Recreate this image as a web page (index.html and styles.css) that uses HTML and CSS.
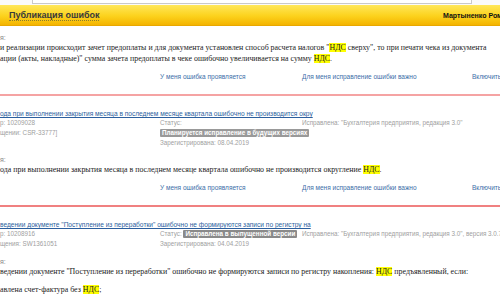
FILE: index.html
```html
<!DOCTYPE html>
<html lang="ru">
<head>
<meta charset="utf-8">
<title>Публикация ошибок</title>
<link rel="stylesheet" href="styles.css">
</head>
<body>
<div class="page">
  <div class="toolbar"><div class="search"></div></div>
  <header class="topbar">
    <span class="title">Публикация ошибок</span>
    <span class="user">Мартыненко Роман</span>
  </header>

  <section class="issue first">
    <div class="label">я:</div>
    <p class="desc">и реализации происходит зачет предоплаты и для документа установлен способ расчета налогов "<mark>НДС</mark> сверху", то при печати чека из документа<br>ации (акты, накладные)" сумма зачета предоплаты в чеке ошибочно увеличивается на сумму <mark>НДС</mark>.</p>
    <div class="actions">
      <span></span>
      <a href="#">У меня ошибка проявляется</a>
      <a href="#">Для меня исправление ошибки важно</a>
      <a href="#">Включить</a>
    </div>
  </section>

  <section class="issue">
    <a class="issue-title" href="#">ода при выполнении закрытия месяца в последнем месяце квартала ошибочно не производится окру</a>
    <div class="meta">
      <div>р: 10209028<br>щении: CSR-33777]</div>
      <div class="status">Статус: <span class="badge">Планируется исправление в будущих версиях</span><br>Зарегистрирована: 08.04.2019</div>
      <div class="fixed">Исправлена: "Бухгалтерия предприятия, редакция 3.0"</div>
    </div>
    <div class="label">я:</div>
    <p class="desc">ода при выполнении закрытия месяца в последнем месяце квартала ошибочно не производится округление <mark>НДС</mark>.</p>
    <div class="actions">
      <span></span>
      <a href="#">У меня ошибка проявляется</a>
      <a href="#">Для меня исправление ошибки важно</a>
      <a href="#">Включить</a>
    </div>
  </section>

  <section class="issue last">
    <a class="issue-title" href="#">ведении документе "Поступление из переработки" ошибочно не формируются записи по регистру на</a>
    <div class="meta">
      <div>р: 10208916<br>щения: SW1361051</div>
      <div class="status">Статус: <span class="badge dark">Исправлена в выпущенной версии</span><br>Зарегистрирована: 04.04.2019</div>
      <div class="fixed">Исправлена: "Бухгалтерия предприятия, редакция 3.0", версия 3.0.71.63</div>
    </div>
    <div class="label">я:</div>
    <p class="desc">ведении документе "Поступление из переработки" ошибочно не формируются записи по регистру накопления: <mark>НДС</mark> предъявленный, если:</p>
    <p class="desc item">авлена счет-фактура без <mark>НДС</mark>;</p>
  </section>
</div>
</body>
</html>
```
FILE: styles.css
```css
html, body {
  margin: 0;
  padding: 0;
  overflow: hidden;
  background: #fff;
}
.page {
  width: 560px;
  font-family: "Liberation Sans", Arial, sans-serif;
  color: #333;
}
.toolbar {
  height: 5px;
  background: #fafafa;
}
.search {
  margin-left: 32px;
  width: 438px;
  height: 3px;
  border: 1px solid #c9c9c9;
  border-top: none;
  background: #fff;
}
.topbar {
  display: grid;
  grid-template-columns: 443px auto;
  align-items: center;
  height: 20px;
  background: linear-gradient(#ffe75a, #fcd21c 55%, #f4b400);
  border-bottom: 1px solid #e8a800;
  font-size: 9px;
  font-weight: bold;
  color: #3a3a3a;
  white-space: nowrap;
}
.topbar .title {
  justify-self: start;
  margin-left: 9px;
  line-height: 10px;
  border-bottom: 1px dotted #8a7a30;
}
.topbar .user {
  font-size: 7px;
  color: #111;
}
.issue {
  padding-top: 13px;
  border-bottom: 2px solid #f08080;
  padding-bottom: 12px;
}
.issue.first {
  padding-top: 0;
  border-bottom-color: #f5a3a3;
}
.issue.last {
  border-bottom: none;
}
.issue-title {
  display: block;
  font-size: 6.6px;
  line-height: 9px;
  color: #2c5f9e;
  white-space: nowrap;
}
.meta {
  display: grid;
  grid-template-columns: 160px 142px 1fr;
  font-size: 6.3px;
  line-height: 10px;
  color: #a0a0a0;
}
.meta > div {
  white-space: nowrap;
}
.meta > .status {
  white-space: normal;
}
.badge {
  display: inline-block;
  white-space: nowrap;
  background: #999;
  color: #fff;
  font-weight: bold;
  line-height: 8px;
  padding: 0 2px;
  border-radius: 1px;
}
.badge.dark {
  background: #8a8a8a;
}
.label {
  margin-top: 7px;
  font-size: 7px;
  line-height: 9px;
  color: #888;
}
.last .label {
  margin-top: 8px;
}
.desc {
  margin: 0;
  font-family: "Liberation Serif", "Times New Roman", serif;
  font-size: 7.9px;
  line-height: 11px;
  color: #222;
  white-space: nowrap;
}
.desc.item {
  margin-top: 7px;
}
mark {
  background: #ffff00;
  color: #222;
}
.actions {
  display: grid;
  grid-template-columns: 160px 142px 170px 1fr;
  margin-top: 8px;
  font-size: 6.5px;
  line-height: 10px;
  white-space: nowrap;
}
.actions a {
  color: #3c6ea8;
  text-decoration: none;
}
```
